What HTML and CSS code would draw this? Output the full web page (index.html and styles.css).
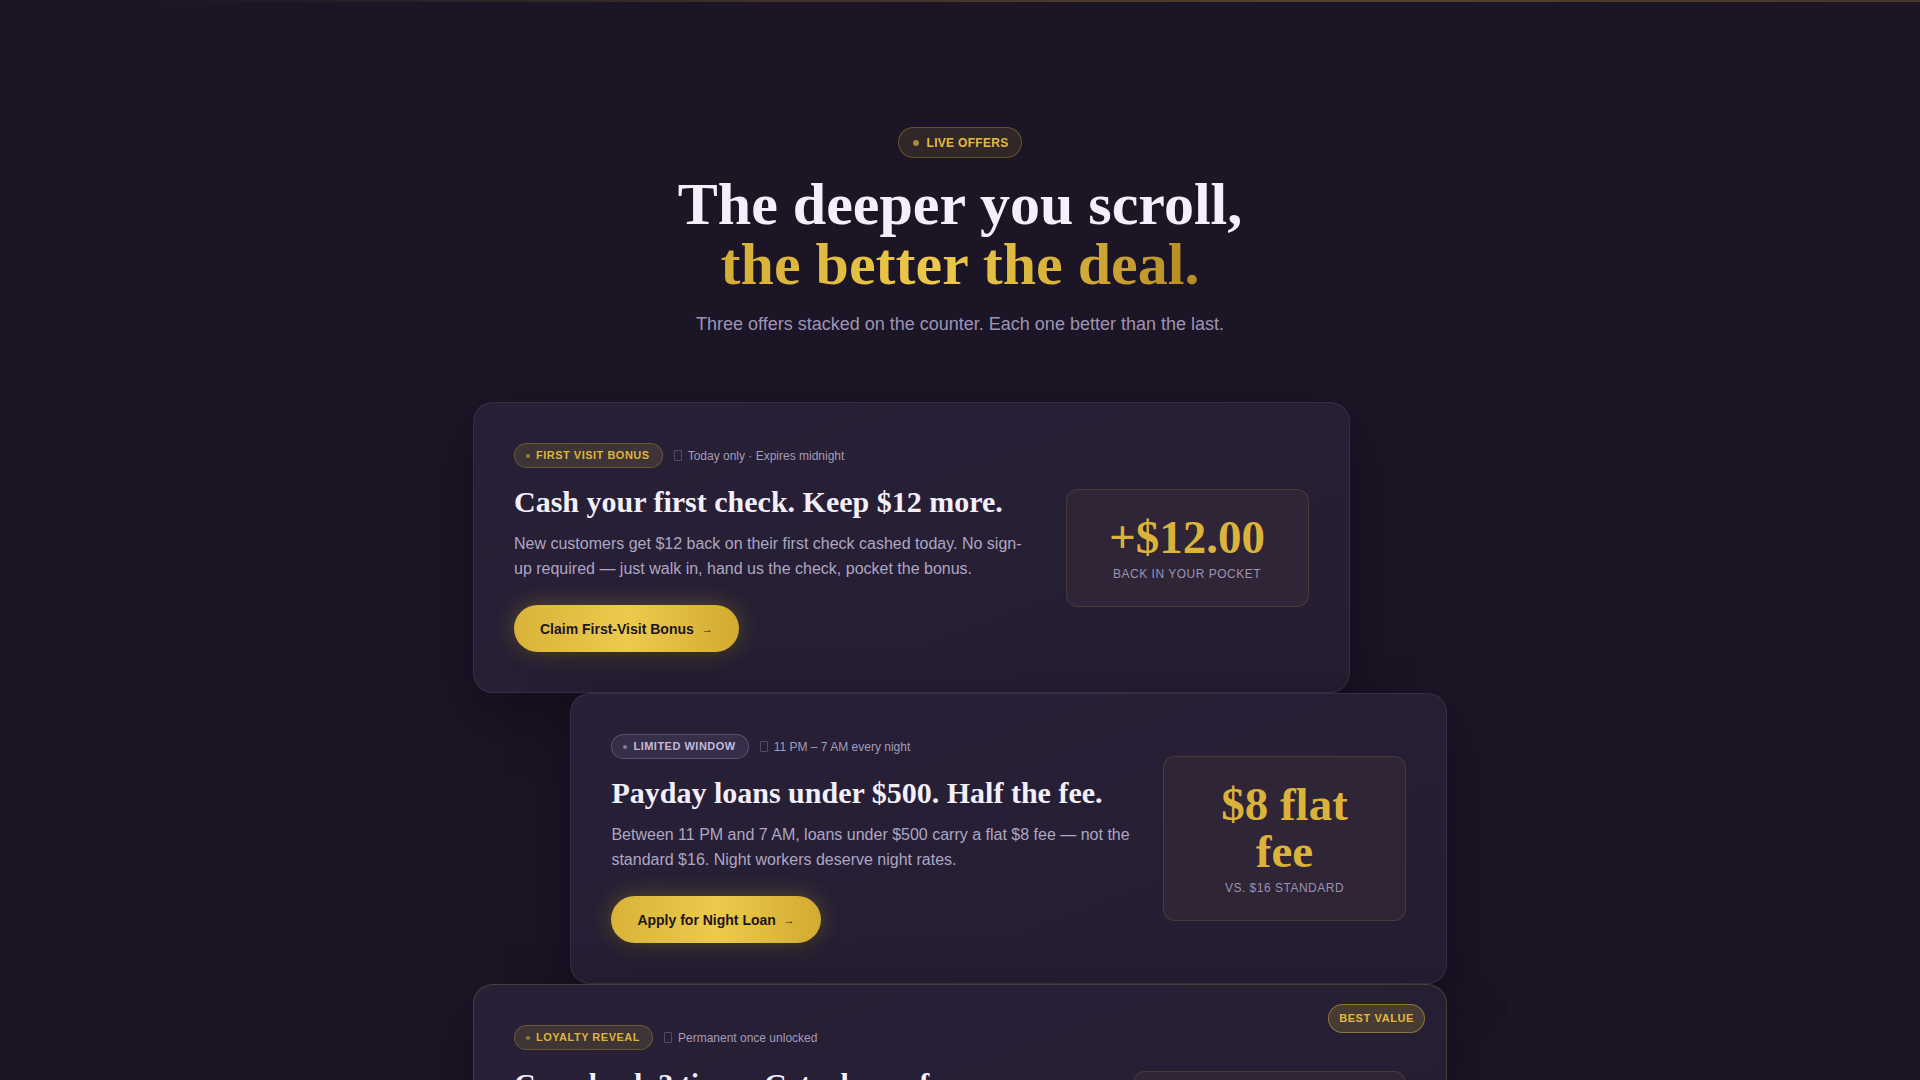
FILE: index.html
```html
<!DOCTYPE html>
<html lang="en">
<head>
<meta charset="utf-8">
<title>Live Offers</title>
<link rel="stylesheet" href="styles.css">
</head>
<body>
<div class="topline"></div>
<main class="page">
  <header class="hero">
    <div class="live-pill"><span class="live-dot"></span>LIVE OFFERS</div>
    <h1 class="headline">The deeper you scroll,<br><span class="gold">the better the deal.</span></h1>
    <p class="subtitle">Three offers stacked on the counter. Each one better than the last.</p>
  </header>

  <section class="stack">
    <article class="card card--left">
      <div class="card-main">
        <div class="tag-row">
          <span class="tag tag--gold"><span class="tag-dot"></span>FIRST VISIT BONUS</span>
          <span class="meta"><span class="meta-icon"></span>Today only · Expires midnight</span>
        </div>
        <h2 class="card-title">Cash your first check. Keep $12 more.</h2>
        <p class="card-desc">New customers get $12 back on their first check cashed today. No sign-up required — just walk in, hand us the check, pocket the bonus.</p>
        <a class="btn" href="#">Claim First-Visit Bonus <span class="arrow">→</span></a>
      </div>
      <div class="value-box">
        <div class="value">+$12.00</div>
        <div class="value-label">BACK IN YOUR POCKET</div>
      </div>
    </article>

    <article class="card card--right">
      <div class="card-main">
        <div class="tag-row">
          <span class="tag tag--lav"><span class="tag-dot"></span>LIMITED WINDOW</span>
          <span class="meta"><span class="meta-icon"></span>11 PM – 7 AM every night</span>
        </div>
        <h2 class="card-title">Payday loans under $500. Half the fee.</h2>
        <p class="card-desc">Between 11 PM and 7 AM, loans under $500 carry a flat $8 fee — not the standard $16. Night workers deserve night rates.</p>
        <a class="btn" href="#">Apply for Night Loan <span class="arrow">→</span></a>
      </div>
      <div class="value-box">
        <div class="value">$8 flat fee</div>
        <div class="value-label">VS. $16 STANDARD</div>
      </div>
    </article>

    <article class="card card--full">
      <span class="best-badge">BEST VALUE</span>
      <div class="card-main">
        <div class="tag-row">
          <span class="tag tag--gold"><span class="tag-dot"></span>LOYALTY REVEAL</span>
          <span class="meta"><span class="meta-icon"></span>Permanent once unlocked</span>
        </div>
        <h2 class="card-title">Comeback 3 times. Get a lower fee.</h2>
        <p class="card-desc">Visit three times and your check-cashing rate drops permanently. No card to carry, no points to track — we remember you.</p>
        <a class="btn" href="#">Unlock Loyalty Rate <span class="arrow">→</span></a>
      </div>
      <div class="value-box">
        <div class="value">−25%</div>
        <div class="value-label">ON EVERY FEE, FOREVER</div>
      </div>
    </article>
  </section>
</main>
</body>
</html>
```

FILE: styles.css
```css
html, body {
  margin: 0;
  padding: 0;
}

body {
  background: #1c1526;
  color: #f2eefa;
  font-family: "Liberation Sans", Arial, sans-serif;
  min-height: 100vh;
}

.topline {
  height: 2px;
  background: linear-gradient(90deg, rgba(212,175,55,0) 8%, rgba(212,175,55,0.18) 40%, rgba(212,175,55,0.3) 70%, rgba(212,175,55,0.22) 100%);
}

.page {
  padding: 125px 0 80px;
}

.hero {
  display: flex;
  flex-direction: column;
  align-items: center;
  text-align: center;
}

.live-pill {
  display: inline-flex;
  align-items: center;
  gap: 8px;
  height: 31px;
  box-sizing: border-box;
  padding: 0 13px 0 14px;
  border-radius: 999px;
  background: rgba(212,175,55,0.12);
  border: 1px solid rgba(212,175,55,0.32);
  color: #e2bb3e;
  font-size: 12px;
  font-weight: 700;
  letter-spacing: 0.3px;
}

.live-dot {
  width: 6px;
  height: 6px;
  border-radius: 50%;
  background: #a88a3a;
}

.headline {
  margin: 16px 0 17px;
  font-family: "Liberation Serif", "Times New Roman", serif;
  font-weight: 700;
  font-size: 60px;
  line-height: 60px;
  color: #f3effb;
}

.headline .gold {
  background: linear-gradient(90deg, #d4ad36 0%, #ecc94c 45%, #d8b23c 70%, #b48b24 100%);
  -webkit-background-clip: text;
  background-clip: text;
  color: transparent;
}

.subtitle {
  margin: 0;
  font-size: 18px;
  line-height: 27px;
  color: #9d94b4;
}

.stack {
  width: 974px;
  margin: 64px auto 0;
  display: flex;
  flex-direction: column;
  gap: 0;
}

.card {
  position: relative;
  box-sizing: border-box;
  width: 90%;
  padding: 40px;
  border-radius: 20px;
  background: linear-gradient(160deg, #272036 0%, #251e33 100%);
  border: 1px solid rgba(255,255,255,0.08);
  box-shadow: 0 24px 60px rgba(8,4,14,0.45);
  display: grid;
  grid-template-columns: 1fr 243px;
  column-gap: 32px;
  align-items: center;
}

.card--left {
  align-self: flex-start;
}

.card--right {
  align-self: flex-end;
}

.card--full {
  width: 100%;
  grid-template-columns: 1fr 273px;
  border-color: rgba(212,175,55,0.22);
}

.card-main {
  min-width: 0;
}

.tag-row {
  display: flex;
  align-items: center;
  gap: 11px;
}

.tag {
  display: inline-flex;
  align-items: center;
  gap: 6px;
  padding: 5px 12px 5px 11px;
  border-radius: 999px;
  font-size: 11px;
  line-height: 13px;
  font-weight: 700;
  letter-spacing: 0.5px;
}

.tag-dot {
  width: 4px;
  height: 4px;
  border-radius: 50%;
  background: currentColor;
  opacity: 0.55;
}

.tag--gold {
  color: #dcb53c;
  background: rgba(212,175,55,0.14);
  border: 1px solid rgba(212,175,55,0.3);
}

.tag--lav {
  color: #c3bad9;
  background: rgba(170,150,210,0.12);
  border: 1px solid rgba(170,150,210,0.32);
}

.meta {
  display: inline-flex;
  align-items: center;
  gap: 6px;
  font-size: 12px;
  color: #a49cb8;
}

.meta-icon {
  width: 6px;
  height: 9px;
  border: 1px solid rgba(164,156,184,0.35);
  border-radius: 1px;
}

.card-title {
  margin: 16px 0 12px;
  font-family: "Liberation Serif", "Times New Roman", serif;
  font-weight: 700;
  font-size: 30px;
  line-height: 36px;
  color: #f3effb;
}

.card-desc {
  margin: 0 0 24px;
  font-size: 16px;
  line-height: 24.6px;
  color: #aea6c2;
}

.btn {
  display: inline-flex;
  align-items: center;
  gap: 8px;
  height: 47px;
  box-sizing: border-box;
  padding: 0 26px;
  border-radius: 999px;
  background: linear-gradient(90deg, #d8b338 0%, #ecca4c 50%, #d2ab30 100%);
  box-shadow: 0 0 22px rgba(222,182,56,0.32), 0 6px 16px rgba(0,0,0,0.3);
  color: #1d1522;
  font-size: 14px;
  font-weight: 700;
  text-decoration: none;
}

.arrow {
  font-size: 11px;
}

.value-box {
  box-sizing: border-box;
  display: flex;
  flex-direction: column;
  align-items: center;
  text-align: center;
  padding: 24px 26px;
  border-radius: 12px;
  background: #2f2536;
  border: 1px solid rgba(212,175,55,0.16);
}

.value {
  font-family: "Liberation Serif", "Times New Roman", serif;
  font-weight: 700;
  font-size: 47px;
  line-height: 1;
  color: #dbb33a;
}

.value-label {
  margin-top: 6px;
  font-size: 12px;
  line-height: 15px;
  letter-spacing: 0.5px;
  color: #9c92b2;
}

.best-badge {
  position: absolute;
  top: 19px;
  right: 21px;
  padding: 7px 10px;
  border-radius: 999px;
  background: rgba(212,175,55,0.2);
  border: 1px solid rgba(212,175,55,0.5);
  color: #e0b93c;
  font-size: 11px;
  line-height: 13px;
  font-weight: 700;
  letter-spacing: 0.6px;
}
```
